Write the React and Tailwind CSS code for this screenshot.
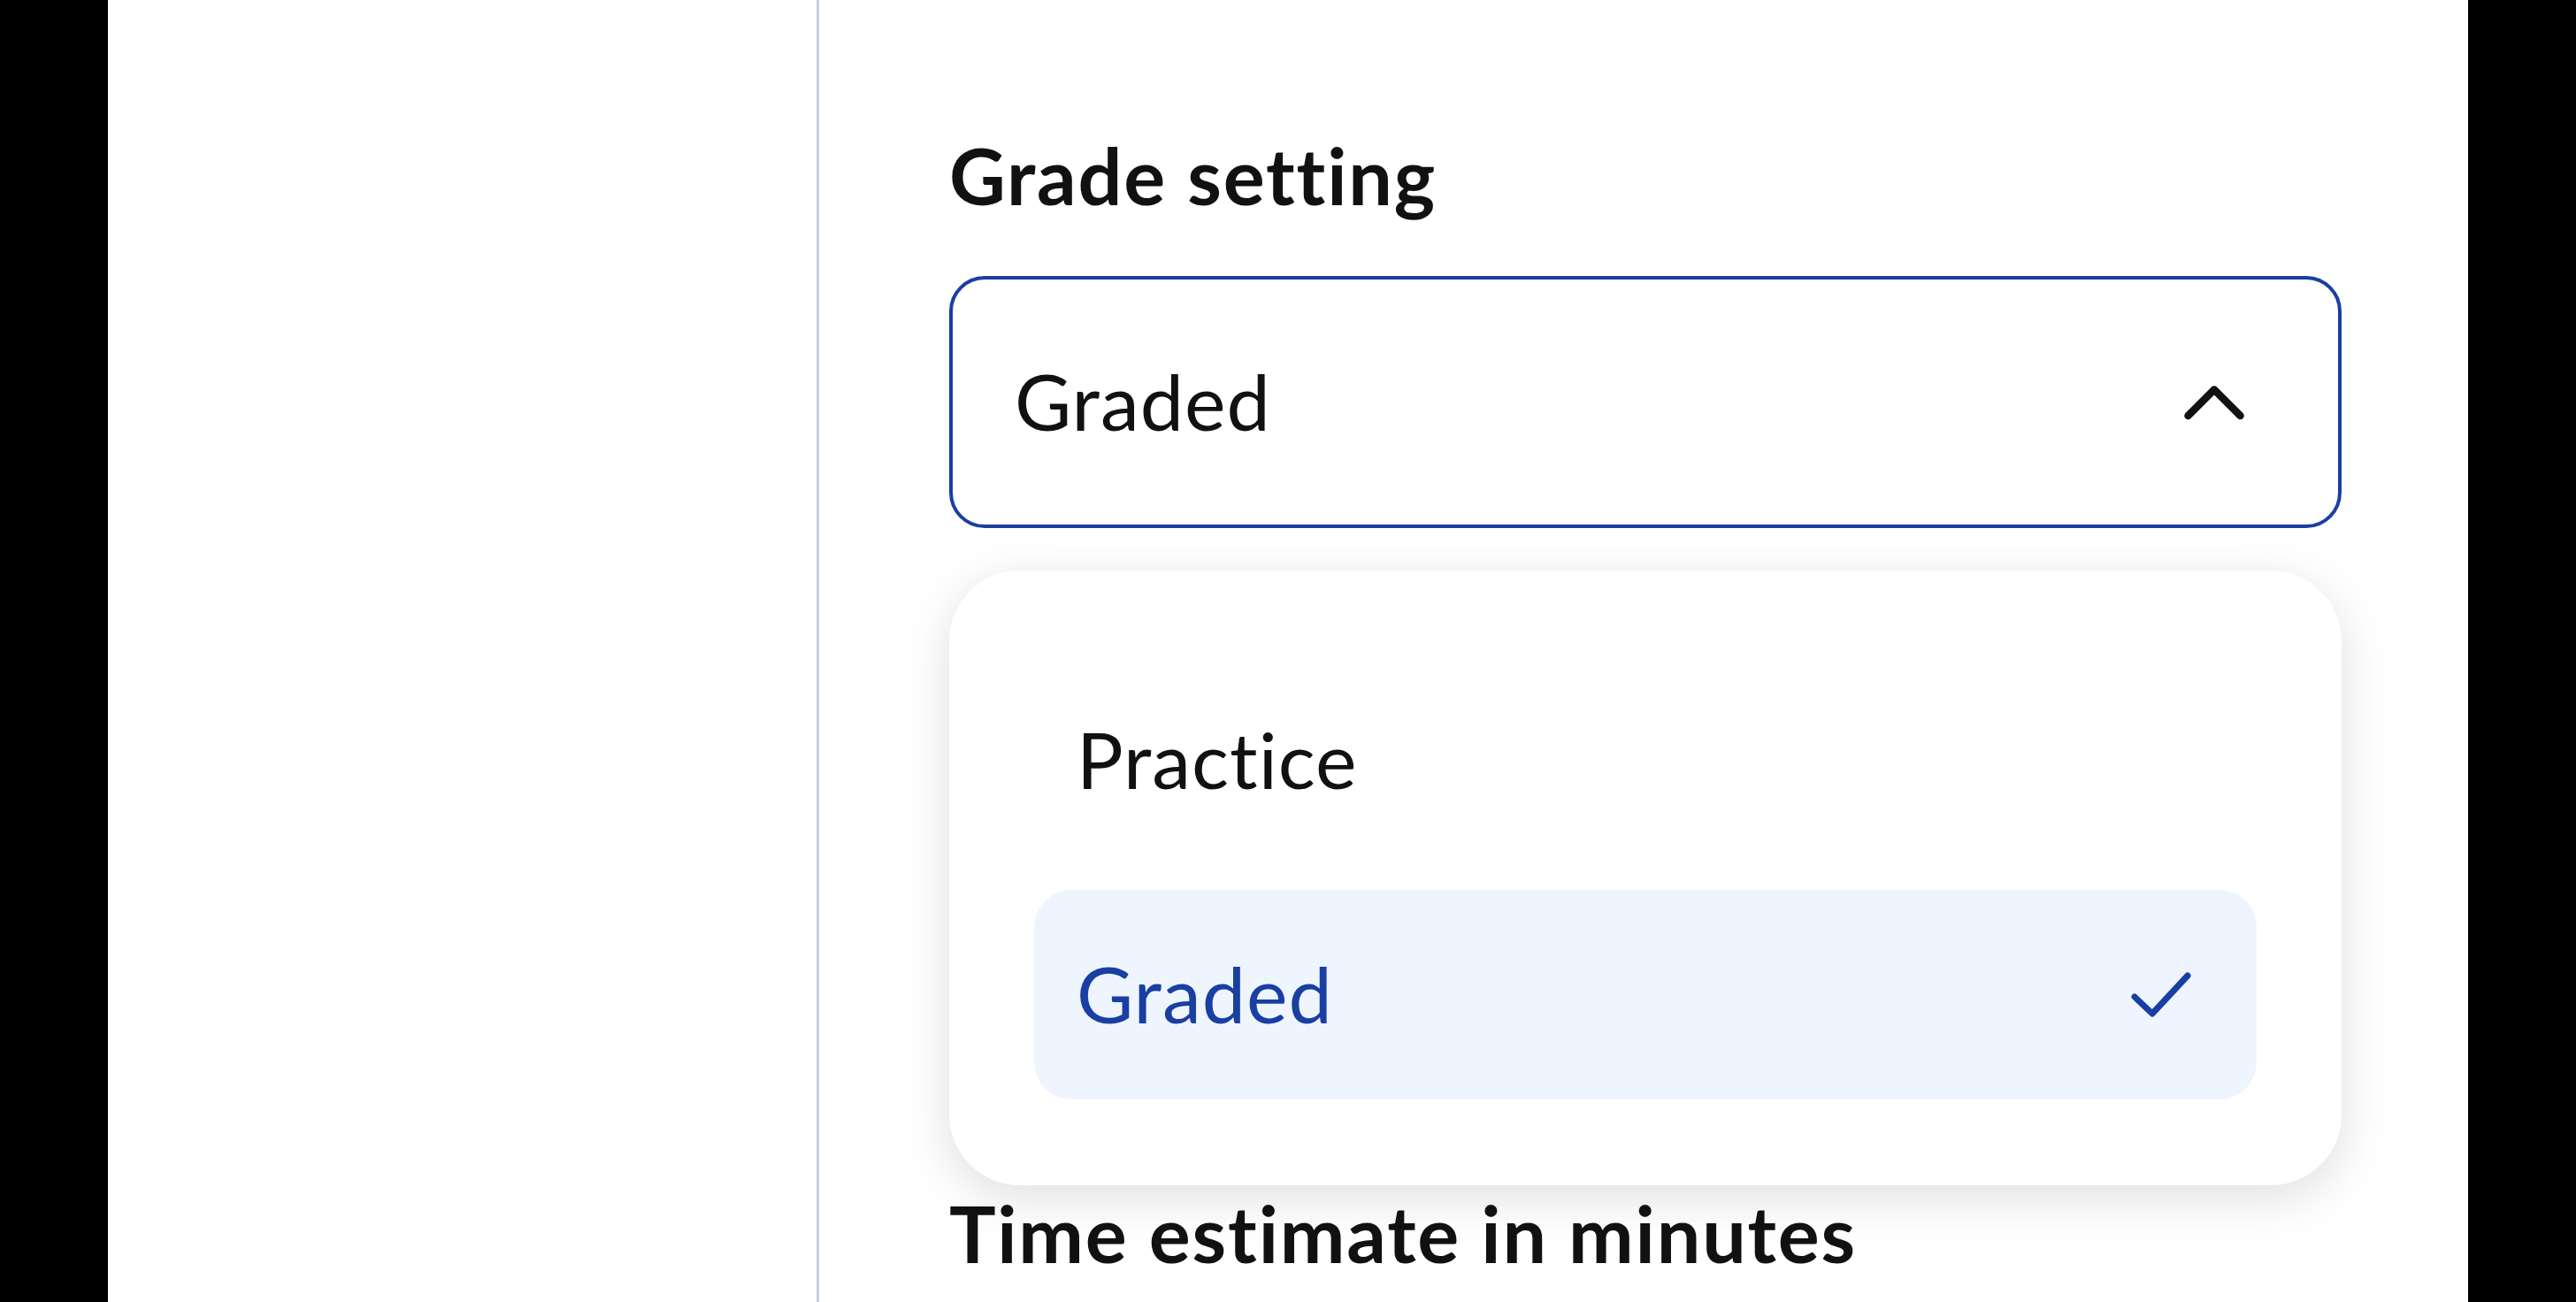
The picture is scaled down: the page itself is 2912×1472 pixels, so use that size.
import React from "react";

const ChevronUp = () => (
  <svg width="72" height="48" viewBox="0 0 72 48" fill="none" stroke="#111111" strokeWidth="8.5" strokeLinecap="round" strokeLinejoin="round">
    <polyline points="6.5,40 36,10.5 65.5,40" />
  </svg>
);

const Check = () => (
  <svg width="74" height="58" viewBox="0 0 74 58" fill="none" stroke="#1a3fa3" strokeWidth="7" strokeLinecap="round" strokeLinejoin="round">
    <polyline points="7,32 27,51 67,8" />
  </svg>
);

const options = [
  { label: "Practice", selected: false },
  { label: "Graded", selected: true },
];

export default function App() {
  return (
    <div className="flex h-screen w-full bg-black [font-family:Lato,sans-serif] text-[#111111]">
      <div className="mx-[122px] flex flex-1 overflow-hidden bg-white">
        {/* left rail */}
        <div className="w-[804px] shrink-0 border-r-[3px] border-[#c8cfdd]" />

        <div className="ml-[147px] flex w-[1574px] flex-col pt-[146px]">
          <h2 className="text-[88px] leading-[1.2] font-bold tracking-[1.8px]">Grade setting</h2>

          <button className="mt-[60px] flex h-[285px] w-full items-center justify-between rounded-[40px] border-4 border-[#1a3fa3] pl-[70px] pr-[104px] text-left">
            <span className="text-[88px] leading-[1.2] tracking-[1px]">Graded</span>
            <ChevronUp />
          </button>

          <div className="mt-[48px] flex h-[695px] flex-col gap-[28px] rounded-[80px] bg-white p-[96px] shadow-[0_14px_56px_rgba(0,0,0,0.13)]">
            {options.map((o) => (
              <div
                key={o.label}
                className={`flex h-[237px] items-center justify-between rounded-[42px] pl-[48px] pr-[71px] ${o.selected ? "bg-[#eff5ff] text-[#1a3fa3]" : ""}`}
              >
                <span className="text-[88px] leading-[1.2] tracking-[1px]">{o.label}</span>
                {o.selected && <Check />}
              </div>
            ))}
          </div>

          <h2 className="mt-[2px] text-[88px] leading-[1.2] font-bold tracking-[1.8px]">Time estimate in minutes</h2>
        </div>
      </div>
    </div>
  );
}
